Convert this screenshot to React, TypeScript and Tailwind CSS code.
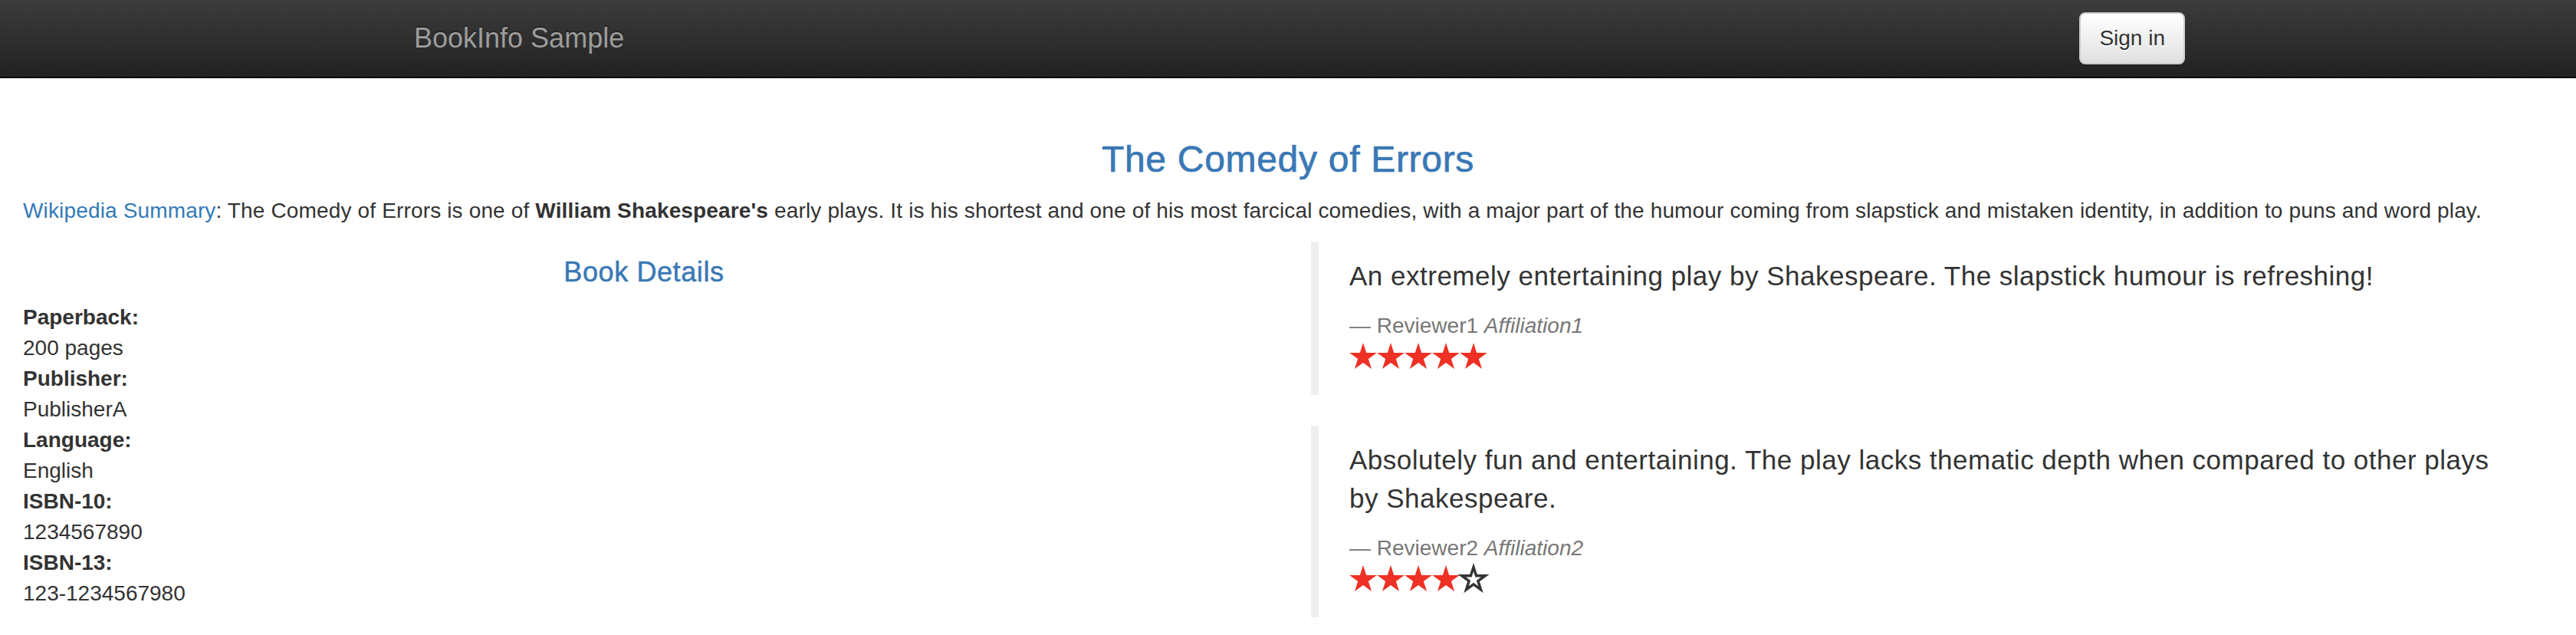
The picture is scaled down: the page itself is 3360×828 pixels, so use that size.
import React from "react";

const STAR = "18,0 22.25,13.08 36,13.08 24.88,21.16 29.13,34.25 18,26.16 6.87,34.25 11.12,21.16 0,13.08 13.75,13.08";

function Star({ filled }: { filled: boolean }) {
  return (
    <svg width="36" height="34" viewBox="0 0 36 34.25" className="block overflow-visible">
      {filled ? (
        <polygon points={STAR} fill="#ee3124" />
      ) : (
        <g transform="translate(18 18.5) scale(0.86) translate(-18 -18.5)">
          <polygon points={STAR} fill="none" stroke="#333" strokeWidth="4" strokeLinejoin="miter" />
        </g>
      )}
    </svg>
  );
}

function Review({ text, reviewer, affiliation, stars }: { text: string; reviewer: string; affiliation: string; stars: number }) {
  return (
    <blockquote className="border-l-[10px] border-[#eee] px-[40px] py-[20px] mb-[40px] text-[35px] leading-[50px]">
      <p className="mb-[20px] tracking-[0.5px]">{text}</p>
      <small className="block text-[28px] leading-[40px] text-[#777]">
        {"\u2014\u00a0"}
        {reviewer} <cite className="italic">{affiliation}</cite>
      </small>
      <div className="h-[50px] flex items-start pt-[2px]">
        {[0, 1, 2, 3, 4].map((i) => (
          <Star key={i} filled={i < stars} />
        ))}
      </div>
    </blockquote>
  );
}

const details: [string, string][] = [
  ["Paperback:", "200 pages"],
  ["Publisher:", "PublisherA"],
  ["Language:", "English"],
  ["ISBN-10:", "1234567890"],
  ["ISBN-13:", "123-1234567980"],
];

export default function App() {
  return (
    <div className="min-h-[828px] bg-white text-[#333] text-[28px] leading-[40px] font-['Liberation_Sans',Arial,sans-serif]">
      <nav className="h-[102px] bg-linear-to-b from-[#3c3c3c] to-[#222] border-b-2 border-[#080808]">
        <div className="w-[2340px] mx-auto pl-[30px] flex justify-between items-start">
          <span className="py-[30px] text-[36px] leading-[40px] text-[#9d9d9d] [text-shadow:0_-2px_0_rgba(0,0,0,0.25)]">
            BookInfo Sample
          </span>
          <button className="mt-[16px] h-[68px] px-[24px] py-[12px] text-[28px] leading-[40px] text-[#333] border-2 border-[#ccc] rounded-[8px] bg-linear-to-b from-white to-[#e0e0e0] [text-shadow:0_2px_0_#fff] shadow-[inset_0_2px_0_rgba(255,255,255,0.15),0_2px_2px_rgba(0,0,0,0.075)] flex items-center">
            Sign in
          </button>
        </div>
      </nav>

      <main className="pt-[40px] px-[30px]">
        <div className="flow-root">
          <h3 className="mt-[40px] mb-[20px] text-center text-[48px] leading-[52.8px] tracking-[0.7px] text-[#3a78b5] [-webkit-text-stroke:0.7px_#3a78b5]">
            The Comedy of Errors
          </h3>
          <p className="mb-[20px] tracking-[0.15px]">
            <a className="text-[#337ab7]">Wikipedia Summary</a>: The Comedy of Errors is one of{" "}
            <b>William Shakespeare's</b> early plays. It is his shortest and one of his most farcical comedies, with a
            major part of the humour coming from slapstick and mistaken identity, in addition to puns and word play.
          </p>
        </div>
        <div className="flex -mx-[30px]">
          <div className="w-1/2 px-[30px]">
            <h4 className="mt-[20px] mb-[20px] text-center text-[36px] leading-[39.6px] tracking-[0.6px] text-[#3a78b5] [-webkit-text-stroke:0.5px_#3a78b5]">
              Book Details
            </h4>
            <dl>
              {details.map(([k, v]) => (
                <React.Fragment key={k}>
                  <dt className="font-bold leading-[40px]">{k}</dt>
                  <dd className="leading-[40px]">{v}</dd>
                </React.Fragment>
              ))}
            </dl>
          </div>
          <div className="w-1/2 px-[30px]">
            <Review
              text="An extremely entertaining play by Shakespeare. The slapstick humour is refreshing!"
              reviewer="Reviewer1"
              affiliation="Affiliation1"
              stars={5}
            />
            <Review
              text="Absolutely fun and entertaining. The play lacks thematic depth when compared to other plays by Shakespeare."
              reviewer="Reviewer2"
              affiliation="Affiliation2"
              stars={4}
            />
          </div>
        </div>
      </main>
    </div>
  );
}
